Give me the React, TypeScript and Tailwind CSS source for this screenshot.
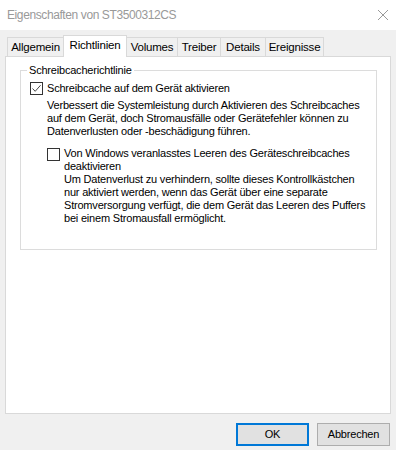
import React from 'react';

const tabs = [
  { label: 'Allgemein', w: 'w-[56px]' },
  { label: 'Richtlinien', w: 'w-[64px]', active: true },
  { label: 'Volumes', w: 'w-[50px]' },
  { label: 'Treiber', w: 'w-[43px]' },
  { label: 'Details', w: 'w-[45px]' },
  { label: 'Ereignisse', w: 'w-[59px]' },
];

const CheckBox: React.FC<{ checked?: boolean }> = ({ checked }) => (
  <span className="w-[13px] h-[13px] border border-[#333] bg-white flex items-center justify-center shrink-0">
    {checked && (
      <svg width="11" height="11" viewBox="0 0 11 11">
        <path d="M1.5 5.5 L4.2 8.3 L9.6 2.2" fill="none" stroke="#333" strokeWidth="0.9" />
      </svg>
    )}
  </span>
);

const App: React.FC = () => {
  return (
    <div className="w-[396px] h-[450px] bg-[#f0f0f0] flex flex-col text-[11px] tracking-[-0.2px] text-black font-['Liberation_Sans',Arial,sans-serif] overflow-hidden">
      {/* title bar */}
      <div className="h-[30px] bg-white flex items-center justify-between pl-[7px] pr-[6px] shrink-0">
        <span className="text-[#999] text-[12px] tracking-[-0.4px] leading-[15px]">Eigenschaften von ST3500312CS</span>
        <svg width="12" height="12" viewBox="0 0 12 12" className="mr-[1px]">
          <path d="M1 1 L11 11 M11 1 L1 11" stroke="#999" strokeWidth="1" />
        </svg>
      </div>

      <div className="pt-[5px] px-[5px] flex flex-col">
        {/* tabs */}
        <div className="flex items-end h-[22px] pl-[2px] -mb-px relative z-10 text-[11.5px]">
          {tabs.map((t, i) =>
            t.active ? (
              <div
                key={t.label}
                className={`${t.w} h-[22px] bg-white border border-b-0 border-[#d9d9d9] flex items-center justify-center pb-[1px]`}
              >
                {t.label}
              </div>
            ) : (
              <div
                key={t.label}
                className={`${t.w} h-[20px] bg-[#f0f0f0] border-t border-b border-[#d9d9d9] flex items-center justify-center pt-[1px] ${
                  i === 0 || !tabs[i - 1].active ? 'border-l' : ''
                } ${i === tabs.length - 1 ? 'border-r' : ''}`}
              >
                {t.label}
              </div>
            )
          )}
        </div>

        {/* panel */}
        <div className="h-[358px] bg-white border border-[#d9d9d9] pl-[14px] pr-[13px] pt-[6px]">
          <fieldset className="border border-[#dcdcdc] pl-[9px] pr-2 pb-[24px]">
            <legend className="-ml-[3px] px-[2px] leading-[15px]">Schreibcacherichtlinie</legend>
            <label className="flex items-center gap-[4px] mt-[3px] h-[15px] leading-[15px] whitespace-nowrap">
              <CheckBox checked />
              <span>Schreibcache auf dem Gerät aktivieren</span>
            </label>
            <p className="ml-[17px] mt-[3px] leading-[13px] whitespace-nowrap">
              Verbessert die Systemleistung durch Aktivieren des Schreibcaches
              <br />
              auf dem Gerät, doch Stromausfälle oder Gerätefehler können zu
              <br />
              Datenverlusten oder -beschädigung führen.
            </p>
            <div className="ml-[17px] mt-[9px] flex items-start gap-[4px]">
              <span className="mt-[1px]">
                <CheckBox />
              </span>
              <div className="whitespace-nowrap">
                <p className="leading-[13px]">
                  Von Windows veranlasstes Leeren des Geräteschreibcaches
                  <br />
                  deaktivieren
                </p>
                <p className="leading-[13px]">
                  Um Datenverlust zu verhindern, sollte dieses Kontrollkästchen
                  <br />
                  nur aktiviert werden, wenn das Gerät über eine separate
                  <br />
                  Stromversorgung verfügt, die dem Gerät das Leeren des Puffers
                  <br />
                  bei einem Stromausfall ermöglicht.
                </p>
              </div>
            </div>
          </fieldset>
        </div>
      </div>

      {/* buttons */}
      <div className="flex justify-end gap-[8px] pr-[6px] mt-[9px]">
        <button className="w-[73px] h-[23px] bg-[#e1e1e1] border-2 border-[#0078d7] flex items-center justify-center">
          OK
        </button>
        <button className="w-[73px] h-[23px] bg-[#e1e1e1] border border-[#adadad] flex items-center justify-center">
          Abbrechen
        </button>
      </div>
    </div>
  );
};

export default App;
